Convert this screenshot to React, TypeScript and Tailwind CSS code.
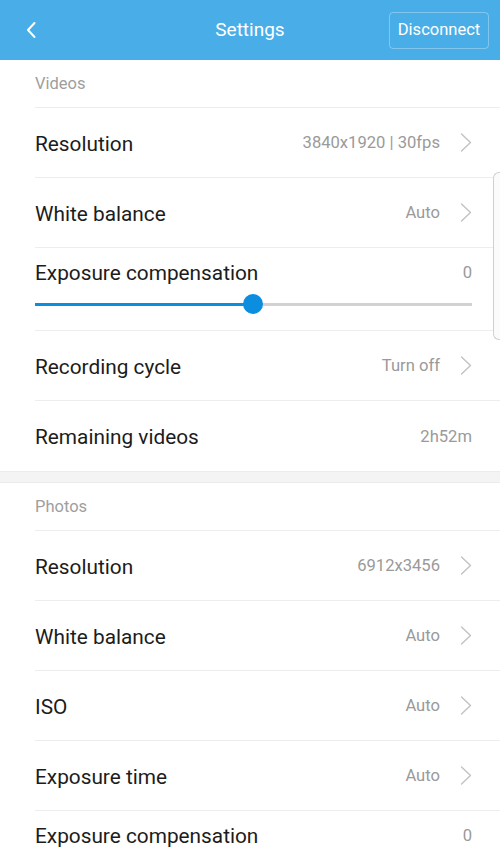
import React from "react";

const Chevron = () => (
  <svg width="12" height="19" viewBox="0 0 12 19" fill="none" stroke="#c2c2c2" strokeWidth="1.4" strokeLinecap="round" strokeLinejoin="round">
    <path d="M1.5 1 L10.5 9.5 L1.5 18" />
  </svg>
);

const Row = ({ label, value, chevron = true, border = true }: { label: string; value?: string; chevron?: boolean; border?: boolean }) => (
  <div className={`ml-[35px] pr-[28px] h-[70px] flex items-center justify-between ${border ? "border-b border-[#ededed]" : ""}`}>
    <span className="text-[20.8px] text-[#1c1c1c] leading-[26px] translate-y-[1px]">{label}</span>
    <div className="flex items-center gap-[20px]">
      {value && <span className="text-[16.6px] text-[#9a9a9a] translate-y-[1px]">{value}</span>}
      {chevron && <Chevron />}
    </div>
  </div>
);

const SliderRow = ({ label, value }: { label: string; value: string }) => (
  <div className="ml-[35px] pr-[28px] h-[83px] border-b border-[#ededed] flex flex-col">
    <div className="flex items-center justify-between mt-[12px] h-[26px]">
      <span className="text-[20.8px] text-[#1c1c1c] translate-y-[1px]">{label}</span>
      <span className="text-[16.6px] text-[#9a9a9a]">{value}</span>
    </div>
    <div className="relative mt-[8px] h-[20px] flex items-center">
      <div className="w-full h-[3px] bg-[#d2d2d2] flex">
        <div className="w-[218px] h-full bg-[#0b8de0]" />
      </div>
      <div className="absolute left-[208px] top-0 w-[20px] h-[20px] rounded-full bg-[#0b8de0]" />
    </div>
  </div>
);

const SectionHeader = ({ title }: { title: string }) => (
  <div className="ml-[35px] h-[48px] flex items-center border-b border-[#ededed]">
    <span className="text-[16.5px] text-[#9e9e9e] translate-y-[1px]">{title}</span>
  </div>
);

export default function App() {
  return (
    <div className="relative w-[500px] h-[852px] overflow-hidden bg-white" style={{ fontFamily: "Roboto, 'Noto Sans', sans-serif" }}>
      <div className="h-[60px] bg-[#49aee8] grid grid-cols-[1fr_auto_1fr] items-center px-[11px]">
        <div className="w-[40px] h-[40px] flex items-center justify-center">
          <svg width="12" height="18" viewBox="0 0 12 18" fill="none" stroke="white" strokeWidth="2" strokeLinecap="round" strokeLinejoin="round">
            <path d="M9.5 2 L3 9 L9.5 16" />
          </svg>
        </div>
        <span className="text-[19px] text-white">Settings</span>
        <div className="justify-self-end h-[37px] w-[100px] rounded-[4px] border border-white/30 flex items-center justify-center text-[16.5px] text-white">
          Disconnect
        </div>
      </div>

      <SectionHeader title="Videos" />
      <Row label="Resolution" value="3840x1920 | 30fps" />
      <Row label="White balance" value="Auto" />
      <SliderRow label="Exposure compensation" value="0" />
      <Row label="Recording cycle" value="Turn off" />
      <Row label="Remaining videos" value="2h52m" chevron={false} border={false} />
      <div className="h-[12px] bg-[#f4f4f4] border-y border-[#ececec]" />

      <SectionHeader title="Photos" />
      <Row label="Resolution" value="6912x3456" />
      <Row label="White balance" value="Auto" />
      <Row label="ISO" value="Auto" />
      <Row label="Exposure time" value="Auto" />
      <SliderRow label="Exposure compensation" value="0" />

      <div className="absolute right-0 top-[172px] w-[7px] h-[168px] rounded-l-[6px] border border-r-0 border-[#d0d0d0] bg-[#fbfbfb]" />
    </div>
  );
}
